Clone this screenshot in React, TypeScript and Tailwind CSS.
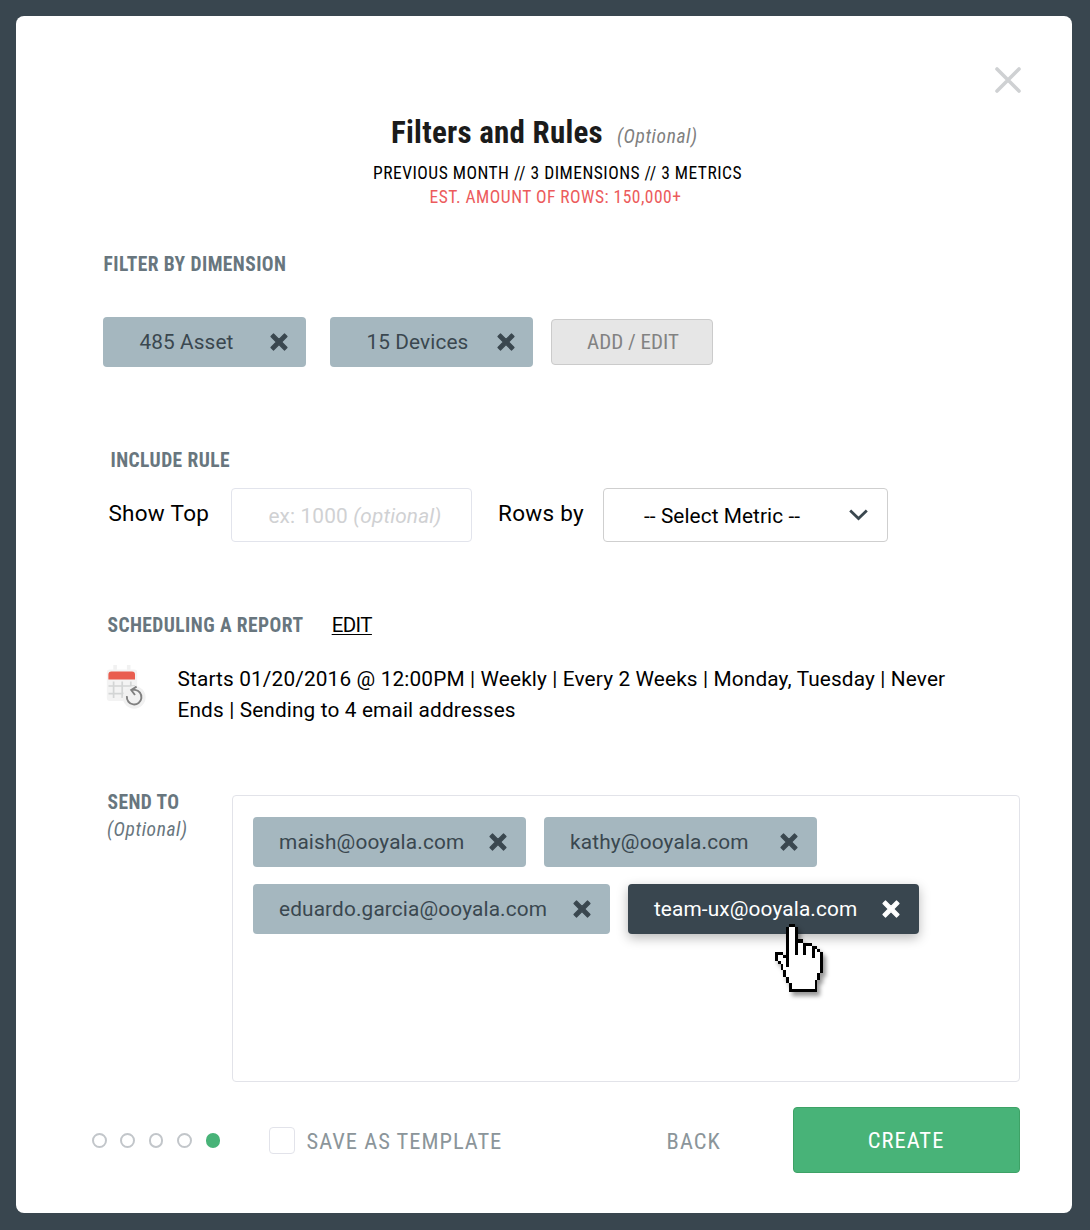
import type { ReactNode } from "react";

const CONDENSED = "[font-stretch:75%]";

function CrossIcon() {
  return (
    <svg width="18" height="18" viewBox="0 0 18 18" className="shrink-0">
      <path
        d="M3.5 1 9 6.4 14.5 1 17 3.5 11.6 9 17 14.5 14.5 17 9 11.6 3.5 17 1 14.5 6.4 9 1 3.5Z"
        fill="currentColor"
        stroke="currentColor"
        strokeWidth="1.2"
        strokeLinejoin="round"
      />
    </svg>
  );
}

function Tag({ children, className }: { children: ReactNode; className: string }) {
  return (
    <div className={`flex h-[50px] shrink-0 items-center justify-between rounded-[4px] text-[20.8px] ${className}`}>
      <span className="whitespace-nowrap pt-[2px]">{children}</span>
      <button aria-label="Remove">
        <CrossIcon />
      </button>
    </div>
  );
}

function SectionTitle({ children, className = "" }: { children: ReactNode; className?: string }) {
  return (
    <h2
      className={`${CONDENSED} whitespace-nowrap text-[19.5px] font-bold leading-[24px] tracking-[0.42px] text-[#68767e] ${className}`}
    >
      {children}
    </h2>
  );
}

function CalendarIcon() {
  return (
    <svg width="42" height="46" viewBox="0 0 42 46" className="shrink-0" fill="none">
      <rect x="7.3" y="1" width="3.6" height="8" fill="#f1f1f1" />
      <rect x="20.9" y="1" width="3.6" height="8" fill="#f1f1f1" />
      <rect x="0.8" y="5.5" width="30.4" height="31.5" rx="3" fill="#f3f3f3" />
      <path d="M2.4 15.4V10.5a3 3 0 0 1 3-3H26a3 3 0 0 1 3 3v4.9Z" fill="#e95d4f" />
      <path d="M2.5 22H29M2.5 29.6H29M7.6 17.5V34M16.2 17.5V34M24.8 17.5V34" stroke="#d3d5d5" strokeWidth="1.7" />
      <circle cx="28.2" cy="33.3" r="11.4" fill="#f1f1f1" />
      <path d="M20.9 32.2a7.3 7.3 0 1 0 8.2-6.3H25.2" stroke="#808080" strokeWidth="1.9" />
      <path d="M30.6 22.6 25.2 26 29 31" stroke="#808080" strokeWidth="1.9" />
    </svg>
  );
}

const HAND = [
  "     XX",
  "    X..X",
  "    X..X",
  "    X..X",
  "    X..X",
  "    X..XXX",
  "    X..X..XXX",
  "    X..X..X..XX",
  "    X..X..X..X.X",
  "XXX X..X..X..X..X",
  "X..XX........X..X",
  "X...X...........X",
  " X..X...........X",
  "  X.X...........X",
  "  X.............X",
  "   X............X",
  "   X...........X",
  "    X..........X",
  "    X.........X",
  "     X........X",
  "     X........X",
  "     XXXXXXXXXX",
];

function HandCursor() {
  return (
    <svg
      width="48"
      height="68"
      viewBox="0 0 17 22"
      preserveAspectRatio="none"
      shapeRendering="crispEdges"
      className="pointer-events-none absolute left-[147px] top-[40px] z-10 overflow-visible drop-shadow-[3px_4px_2px_rgba(0,0,0,0.4)]"
    >
      {HAND.flatMap((row, y) =>
        [...row].map((c, x) =>
          c === " " ? null : (
            <rect key={`${x}-${y}`} x={x} y={y} width="1" height="1" fill={c === "X" ? "#000" : "#fff"} />
          ),
        ),
      )}
    </svg>
  );
}

export default function App() {
  return (
    <div className="h-[1230px] w-[1090px] bg-[#39464f] pl-4 pt-4 font-['Roboto',sans-serif] text-black">
      <main className="relative h-[1196.5px] w-[1056px] rounded-[8px] bg-white pt-[98.5px]">
        <button aria-label="Close" className="absolute right-[51px] top-[51px]">
          <svg width="26" height="26" viewBox="0 0 26 26" stroke="#cfd1d3" strokeWidth="3.6" strokeLinecap="round">
            <path d="M2 2 24 24M24 2 2 24" />
          </svg>
        </button>

        <header className={CONDENSED}>
          <div className="flex h-[36px] items-baseline pl-[375px] leading-[36px]">
            <h1 className="whitespace-nowrap text-[31px] font-bold tracking-[0.25px] text-[#1b1b1b]">Filters and Rules</h1>
            <span className="ml-[14px] text-[19.5px] italic tracking-[0.6px] text-[#808080]">(Optional)</span>
          </div>
          <p className="mt-[10px] whitespace-nowrap pl-[357px] text-[17.5px] leading-[24.5px] tracking-[0.49px]">
            PREVIOUS MONTH // 3 DIMENSIONS // 3 METRICS
          </p>
          <p className="whitespace-nowrap pl-[413.5px] text-[17.5px] leading-[24.5px] tracking-[0.48px] text-[#ec5b5c]">
            EST. AMOUNT OF ROWS: 150,000+
          </p>
        </header>

        <section className="mt-[43.5px] pl-[87px]">
          <SectionTitle className="pl-[0.5px]">FILTER BY DIMENSION</SectionTitle>
          <div className="mt-[40px] flex items-center">
            <Tag className="w-[203px] bg-[#a5b7bf] pl-[36.5px] pr-[18.4px] tracking-[0.1px] text-[#3a474f]">485 Asset</Tag>
            <Tag className="ml-[24.4px] w-[202.6px] bg-[#a5b7bf] pl-[36.1px] pr-[18px] tracking-[0.1px] text-[#3a474f]">
              15 Devices
            </Tag>
            <button
              className={`${CONDENSED} ml-[18px] h-[46px] w-[162px] rounded-[4px] border border-[#cbcbcb] bg-[#e6e6e6] pl-[2px] pt-px text-[21px] text-[#828282]`}
            >
              ADD / EDIT
            </button>
          </div>
        </section>

        <section className="mt-[82px] pl-[92px]">
          <SectionTitle className="pl-[2.5px]">INCLUDE RULE</SectionTitle>
          <div className="mt-[15px] flex h-[54px] items-center">
            <label className="w-[123.4px] whitespace-nowrap pb-[2px] pl-[0.4px] text-[22.5px] tracking-[0.3px]">Show Top</label>
            <div className="flex h-[54px] w-[240.6px] items-center whitespace-nowrap rounded-[4px] border border-[#e2e4ec] pl-[36px] pt-[3px] text-[20.8px] tracking-[0.15px] text-[#d0d1d3]">
              ex: 1000&nbsp;<i>(optional)</i>
            </div>
            <label className="ml-[26px] w-[105px] whitespace-nowrap pb-[2px] text-[22.5px] tracking-[0.3px]">Rows by</label>
            <div className="flex h-[54px] w-[285px] items-center justify-between rounded-[4px] border border-[#cfcfcf] pl-[40px] pr-[19px] text-[20.8px] tracking-[0.08px]">
              <span className="whitespace-nowrap pt-[3px]">-- Select Metric --</span>
              <svg width="19" height="12" viewBox="0 0 19 12" fill="none" stroke="#3a474f" strokeWidth="2.8">
                <path d="M1.2 1.6 9.5 9.6 17.8 1.6" />
              </svg>
            </div>
          </div>
        </section>

        <section className="mt-[70.6px] pl-[91px]">
          <div className="flex items-baseline">
            <SectionTitle className="pl-[0.5px]">SCHEDULING A REPORT</SectionTitle>
            <a className="ml-[28.2px] text-[20.5px] leading-[24px] tracking-[-0.6px] underline decoration-1 underline-offset-2">
              EDIT
            </a>
          </div>
          <div className="mt-[26.7px] flex">
            <div className="-ml-px w-[71.5px]">
              <CalendarIcon />
            </div>
            <p className="whitespace-nowrap text-[20.8px] leading-[30.5px] tracking-[0.14px]">
              Starts 01/20/2016 @ 12:00PM | Weekly | Every 2 Weeks | Monday, Tuesday | Never
              <br />
              Ends | Sending to 4 email addresses
            </p>
          </div>
        </section>

        <section className="mt-[70px] flex pl-[91px]">
          <div className="w-[124.6px] pt-px">
            <SectionTitle className="-mt-[5px] pl-[0.5px]">SEND TO</SectionTitle>
            <p className={`${CONDENSED} mt-[2.5px] text-[19.5px] italic leading-[24px] tracking-[0.6px] text-[#68767e]`}>
              (Optional)
            </p>
          </div>
          <div className="h-[286.5px] w-[788.4px] rounded-[4px] border border-[#e2e3e9] pl-[20px] pt-[20.3px]">
            <div className="flex gap-[18px] tracking-[0.16px] text-[#3a474f]">
              <Tag className="w-[273.5px] bg-[#a5b7bf] pl-[26.4px] pr-[19px]">maish@ooyala.com</Tag>
              <Tag className="w-[273px] bg-[#a5b7bf] pl-[26px] pr-[19px]">kathy@ooyala.com</Tag>
            </div>
            <div className="mt-[17px] flex gap-[17.4px] tracking-[0.14px] text-[#3a474f]">
              <Tag className="w-[357.9px] bg-[#a5b7bf] pl-[26.4px] pr-[19.5px]">eduardo.garcia@ooyala.com</Tag>
              <div className="relative">
                <Tag className="w-[291px] bg-[#39464f] pl-[26px] pr-[19px] text-white shadow-[0_4px_12px_rgba(0,0,0,0.28)]">
                  team-ux@ooyala.com
                </Tag>
                <HandCursor />
              </div>
            </div>
          </div>
        </section>

        <footer className="mt-[25px] flex h-[66px] items-center pl-[76px]">
          <div className="flex gap-[13.9px] pt-px">
            {[0, 1, 2, 3].map((n) => (
              <span key={n} className="size-[14.5px] rounded-full border-[2.5px] border-[#c2c6ca]" />
            ))}
            <span className="size-[14.5px] rounded-full bg-[#48b378]" />
          </div>
          <span className="ml-[48.5px] mt-px size-[26.5px] rounded-[4px] border border-[#e2e3ea]" />
          <span className={`${CONDENSED} ml-[11.5px] w-[360px] whitespace-nowrap pt-[4px] text-[22.5px] tracking-[1px] text-[#8b959a]`}>
            SAVE AS TEMPLATE
          </span>
          <button className={`${CONDENSED} w-[126px] pt-[4px] text-left text-[22.5px] tracking-[1.05px] text-[#8b959a]`}>
            BACK
          </button>
          <button
            className={`${CONDENSED} h-[66px] w-[227px] rounded-[4px] border border-[#3ea266] bg-[#48b378] pt-[3px] text-[22.5px] tracking-[1.05px] text-white`}
          >
            CREATE
          </button>
        </footer>
      </main>
    </div>
  );
}
